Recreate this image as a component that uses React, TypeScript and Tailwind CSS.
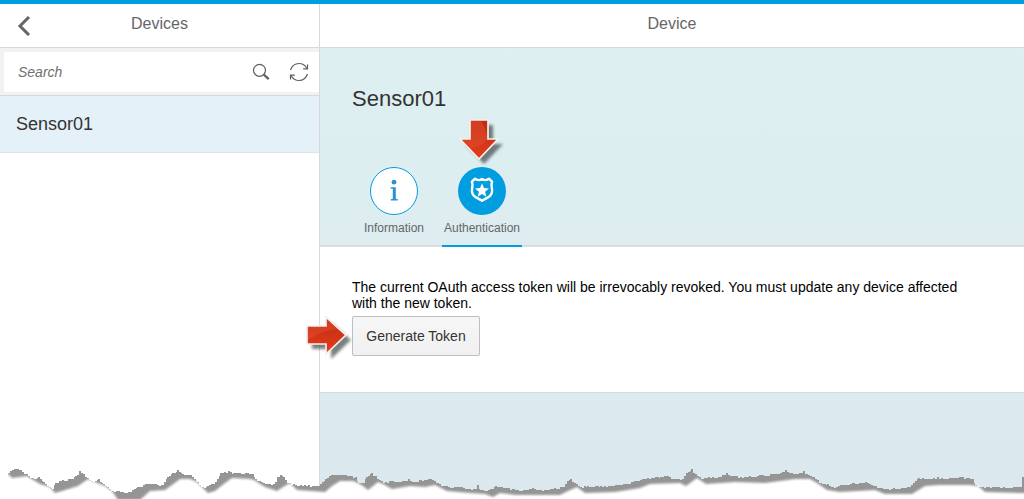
import React from "react";

type Point = [number, number];

const tearTop: Point[] = [
  [8, 473], [10, 471], [15, 469], [20, 470], [26, 474], [30, 478], [35, 479], [38, 477], [43, 482], [52, 489],
  [55, 483], [62, 480], [72, 479], [75, 476], [79, 471], [83, 474], [89, 480], [95, 481], [98, 479], [103, 484],
  [112, 491], [128, 492], [137, 487], [145, 484], [153, 484], [162, 485], [167, 477], [172, 473], [177, 470],
  [182, 474], [190, 475], [197, 482], [202, 487], [207, 486], [215, 482], [220, 473], [228, 471], [233, 473],
  [247, 473], [252, 474], [255, 479], [263, 483], [273, 484], [277, 477], [280, 475], [283, 477], [287, 483],
  [293, 484], [300, 485], [318, 486], [325, 479], [331, 475], [345, 475], [355, 477], [358, 483], [363, 483],
  [366, 477], [371, 473], [375, 476], [383, 483], [390, 481], [402, 481], [408, 479], [413, 482], [420, 480],
  [430, 479], [437, 483], [442, 486], [457, 487], [475, 489], [477, 485], [480, 490], [488, 490], [495, 486],
  [504, 488], [513, 489], [523, 490], [532, 488], [540, 490], [550, 489], [563, 487], [567, 481], [570, 479],
  [574, 483], [580, 487], [587, 486], [600, 486], [615, 485], [623, 484], [632, 482], [647, 478], [660, 477],
  [667, 476], [672, 479], [682, 479], [686, 473], [691, 469], [693, 473], [702, 479], [708, 477], [718, 477],
  [726, 473], [730, 476], [745, 477], [760, 475], [778, 474], [785, 470], [789, 473], [795, 474], [803, 471],
  [808, 475], [813, 477], [822, 484], [827, 484], [832, 487], [842, 485], [853, 483], [865, 482], [875, 486],
  [887, 489], [907, 487], [913, 483], [918, 478], [933, 478], [937, 477], [943, 479], [960, 477], [972, 479],
  [975, 485], [982, 487], [1003, 487], [1020, 487], [1022, 477], [1024, 469],
];

const tearBottom: Point[] = [
  [-6, 473], [7, 473], [12, 478], [20, 477], [27, 476], [30, 478], [40, 484], [50, 487], [55, 493], [62, 491],
  [78, 486], [88, 479], [95, 482], [105, 486], [112, 491], [118, 500], [140, 500], [150, 491], [165, 490],
  [172, 485], [180, 479], [190, 479], [197, 482], [203, 488], [208, 493], [215, 491], [225, 483], [232, 478],
  [250, 479], [254, 480], [265, 487], [277, 491], [283, 487], [290, 483], [297, 490], [325, 492], [332, 486],
  [340, 481], [353, 481], [358, 483], [363, 486], [368, 490], [378, 482], [383, 484], [392, 489], [410, 486],
  [425, 487], [435, 485], [447, 491], [470, 493], [485, 494], [493, 497], [500, 493], [515, 495], [560, 495],
  [568, 491], [577, 487], [585, 493], [615, 492], [640, 488], [650, 484], [680, 483], [686, 486], [697, 478],
  [706, 484], [735, 482], [765, 483], [780, 481], [795, 479], [810, 479], [817, 483], [827, 490], [840, 492],
  [875, 490], [885, 494], [912, 494], [925, 486], [940, 485], [970, 485], [978, 486], [985, 492], [1020, 493],
  [1034, 493],
];

// Adds small teeth between the main points so the paper edge looks ripped.
function roughen(points: Point[]): string {
  const out: string[] = [];
  let seed = 7;
  for (let i = 0; i < points.length - 1; i++) {
    const [x0, y0] = points[i];
    const [x1, y1] = points[i + 1];
    for (let x = x0; x < x1; x += 2) {
      seed = (seed * 73 + 41) % 1009;
      const jitter = x === x0 ? 0 : seed % 2;
      const y = Math.round(y0 + ((y1 - y0) * (x - x0)) / (x1 - x0)) + jitter;
      out.push(`${x},${y} ${Math.min(x + 2, x1)},${y}`);
    }
  }
  return out.join(" ");
}

function TornEdge() {
  return (
    <svg
      className="pointer-events-none absolute bottom-0 left-0 h-10 w-full"
      viewBox="0 459 1024 40"
      preserveAspectRatio="none"
      aria-hidden="true"
    >
      <defs>
        <filter id="tear-soft" x="-2%" y="-40%" width="104%" height="180%">
          <feGaussianBlur stdDeviation="1.3" />
        </filter>
      </defs>
      <polygon
        points={`8,473 ${roughen(tearTop)} 1024,469 1024,500 8,500`}
        fill="#959595"
        shapeRendering="crispEdges"
      />
      <polygon
        points={`${tearBottom.map((p) => p.join(",")).join(" ")} 1034,520 -6,520`}
        fill="#fff"
        filter="url(#tear-soft)"
      />
    </svg>
  );
}

function RedArrow({ id, down = false }: { id: string; down?: boolean }) {
  const shape = down
    ? "M12 3h18v19h10L21 42 2 22h10z"
    : "M3 12h19V3l20 18-20 19V30H3z";
  const shine = down ? "M13 4h10q6 9 6 19-9 9-17 8l-7-8h8z" : "M4 26V13h19V6l11 9Q20 15 4 26z";
  return (
    <svg viewBox="0 0 50 50" className="h-[50px] w-[50px]" aria-hidden="true">
      <defs>
        <filter id={`${id}-blur`} x="-20%" y="-20%" width="150%" height="150%">
          <feGaussianBlur stdDeviation="1.8" />
        </filter>
        <linearGradient id={`${id}-fill`} x1="0" y1="0" x2="0" y2="1">
          <stop offset="0" stopColor="#bd2c12" />
          <stop offset="1" stopColor="#e63c1b" />
        </linearGradient>
      </defs>
      <path d={shape} transform="translate(5 5)" fill="#3f484a" opacity=".7" filter={`url(#${id}-blur)`} />
      <path d={shape} fill={`url(#${id}-fill)`} />
      <path d={shine} fill="#e2502f" opacity=".5" />
      <path d={shape} fill="none" stroke="#f7eeee" strokeWidth="1.7" />
    </svg>
  );
}

function BackIcon() {
  return (
    <svg viewBox="0 0 14 20" className="h-5 w-3.5" fill="none" stroke="#666" strokeWidth="3" aria-hidden="true">
      <path d="M12 1 3 10l9 9" />
    </svg>
  );
}

function SearchIcon() {
  return (
    <svg viewBox="0 0 18 18" className="h-[18px] w-[18px]" fill="none" stroke="#5c6065" aria-hidden="true">
      <circle cx="7.5" cy="7.3" r="6" strokeWidth="1.2" />
      <path d="m11.7 11.5 5 4.7" strokeWidth="2.3" />
    </svg>
  );
}

function RefreshIcon() {
  return (
    <svg viewBox="0 0 20 20" className="h-5 w-5" fill="none" stroke="#5c6065" strokeWidth="1.2" aria-hidden="true">
      <path d="M1.500 8C3 3.600 6 1.500 10 1.500c3.700 0 6.300 1.800 8 5" />
      <path d="M18.500 12C17 16.400 14 18.500 10 18.500c-3.700 0-6.300-1.800-8-5" />
      <path d="M18.500 2.500v4.300h-4.300M1.500 17.500v-4.300h4.300" />
    </svg>
  );
}

function InfoIcon() {
  return (
    <svg viewBox="0 0 48 48" className="h-12 w-12" aria-hidden="true">
      <circle cx="24" cy="24" r="23.500" fill="#fff" stroke="#009de0" />
      <circle cx="24" cy="15.200" r="2.400" fill="#2b93d1" />
      <path d="M20.500 20.200h5.300v11.600l2 .5v1.300h-7v-1.300l2-.5V21.800l-2.300-.4z" fill="#2b93d1" />
    </svg>
  );
}

function ShieldIcon() {
  return (
    <svg viewBox="0 0 48 48" className="h-12 w-12" aria-hidden="true">
      <circle cx="24" cy="24" r="24" fill="#009de0" />
      <path
        d="M17 11.700c1.800 1.600 4.900 1.700 7 .2 2.100 1.500 5.200 1.400 7-.2l3.200 3.200c-1.700 2.700-.1 5-.1 9 0 5.900-5.700 7-10.100 9.900-4.400-2.900-10.100-4-10.100-9.900 0-4 1.600-6.300-.1-9z"
        fill="none"
        stroke="#fff"
        strokeWidth="2.400"
        strokeLinejoin="round"
      />
      <path d="m24 16.300 1.900 4.700 5.100.4-3.900 3.300 1.200 5-4.300-2.700-4.300 2.700 1.200-5-3.900-3.300 5.100-.4z" fill="#fff" />
    </svg>
  );
}

export default function App() {
  return (
    <div className="relative flex min-h-screen flex-col overflow-hidden border-t-4 border-[#009de0] bg-white font-['Liberation_Sans',Arial,sans-serif] text-[#333]">
      <div className="flex flex-1">
        <aside className="flex w-80 shrink-0 flex-col border-r border-[#d9d9d9]">
          <header className="grid h-11 grid-cols-[48px_1fr_48px] items-center border-b border-[#d9d9d9]">
            <button type="button" aria-label="Back" className="flex justify-center">
              <BackIcon />
            </button>
            <h1 className="pb-1 text-center text-base text-[#666]">Devices</h1>
          </header>
          <div className="border-b border-[#d9d9d9] bg-[#f2f2f2] pt-1 pb-[3px] pl-1">
            <form className="flex h-10 items-center bg-white pr-2.5" onSubmit={(e) => e.preventDefault()}>
              <input
                type="search"
                aria-label="Search"
                placeholder="Search"
                className="min-w-0 flex-1 bg-transparent px-3.5 text-sm outline-none placeholder:text-[#707070] placeholder:italic"
              />
              <div className="flex gap-[19px]">
                <button type="submit" aria-label="Find">
                  <SearchIcon />
                </button>
                <button type="button" aria-label="Refresh">
                  <RefreshIcon />
                </button>
              </div>
            </form>
          </div>
          <ul>
            <li className="border-b border-[#dfe4e8] bg-[#e4f1f9]">
              <a href="#sensor01" className="flex h-14 items-center px-4 text-lg">
                Sensor01
              </a>
            </li>
          </ul>
        </aside>

        <main className="flex min-w-0 flex-1 flex-col bg-linear-to-b from-[#def0f2] to-[#dbe9ee]">
          <header className="flex h-11 items-center justify-center border-b border-[#d9d9d9] bg-white pb-1">
            <h2 className="text-base text-[#666]">Device</h2>
          </header>
          <section className="border-b-2 border-[#d9dddd] px-8 pt-9">
            <h3 className="text-[22px] leading-[30px]">Sensor01</h3>
            <nav className="-mb-0.5 flex gap-2 pt-[53px] pl-0.5 text-xs text-[#666]" role="tablist">
              <button type="button" role="tab" aria-selected="false" className="flex h-20 w-20 flex-col items-center gap-[5px]">
                <InfoIcon />
                Information
              </button>
              <button
                type="button"
                role="tab"
                aria-selected="true"
                className="relative flex h-20 w-20 flex-col items-center gap-[5px] border-b-2 border-[#009de0] whitespace-nowrap"
              >
                <ShieldIcon />
                Authentication
                <span className="absolute -top-[50px] left-4">
                  <RedArrow id="arrow-tab" down />
                </span>
              </button>
            </nav>
          </section>
          <section className="border-b border-[#d9d9d9] bg-white pt-8 pr-12 pb-9 pl-8">
            <p className="text-sm leading-4 text-black">
              The current OAuth access token will be irrevocably revoked. You must update any device affected with the new token.
            </p>
            <div className="relative mt-[5px] w-fit">
              <button
                type="button"
                className="h-10 w-32 rounded-xs border border-[#bfbfbf] bg-linear-to-b from-[#f7f7f7] to-[#f0f0f0] text-sm"
              >
                Generate Token
              </button>
              <span className="absolute -top-0.5 -left-12">
                <RedArrow id="arrow-button" />
              </span>
            </div>
          </section>
        </main>
      </div>
      <TornEdge />
    </div>
  );
}
